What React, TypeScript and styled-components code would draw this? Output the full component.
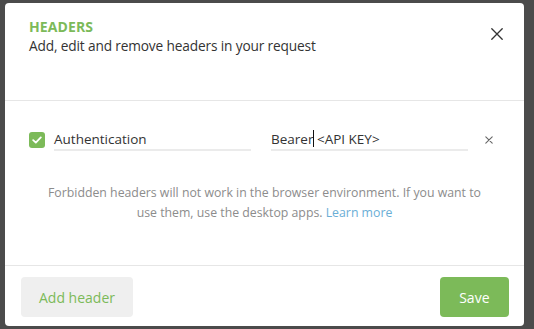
import styled, { createGlobalStyle } from 'styled-components'

const GlobalStyle = createGlobalStyle`
  html, body {
    margin: 0;
    padding: 0;
    background: #4b4b4b;
  }
  body {
    font-family: "Open Sans", "Noto Sans", "Liberation Sans", sans-serif;
    -webkit-font-smoothing: antialiased;
  }
`

const Backdrop = styled.div`
  width: 534px;
  height: 329px;
  box-sizing: border-box;
  padding: 3px 10px 3px 5px;
  background: #4b4b4b;
`

const Modal = styled.div`
  width: 519px;
  height: 323px;
  background: #fff;
  border-radius: 4px;
  display: flex;
  flex-direction: column;
  overflow: hidden;
`

const Header = styled.div`
  height: 98px;
  box-sizing: border-box;
  padding: 14px 16px 0 24px;
  border-bottom: 1px solid #e6e6e6;
  display: flex;
  align-items: flex-start;
  justify-content: space-between;
`

const Titles = styled.div`
  display: flex;
  flex-direction: column;
`

const Title = styled.h2`
  margin: 0;
  font-size: 14px;
  font-weight: 700;
  line-height: 19px;
  color: #7cba59;
  letter-spacing: 0.1px;
`

const Subtitle = styled.p`
  margin: 0;
  font-size: 13.7px;
  font-weight: 400;
  line-height: 19px;
  letter-spacing: -0.15px;
  color: #333;
`

const CloseButton = styled.button`
  margin-top: 6px;
  width: 22px;
  height: 22px;
  padding: 0;
  border: none;
  background: transparent;
  display: flex;
  align-items: center;
  justify-content: center;
  cursor: pointer;
`

const Body = styled.div`
  flex: 1;
  box-sizing: border-box;
  padding: 28px 24px 0 24px;
  display: flex;
  flex-direction: column;
`

const Row = styled.div`
  display: flex;
  align-items: center;
  height: 22px;
`

const Check = styled.span`
  width: 16px;
  height: 16px;
  border-radius: 3px;
  background: #7cba59;
  display: flex;
  align-items: center;
  justify-content: center;
  margin-right: 9px;
  flex-shrink: 0;
`

const Field = styled.div<{ $gap?: number }>`
  width: 197px;
  height: 22px;
  box-sizing: border-box;
  border-bottom: 2px solid #ebebeb;
  font-size: 13.5px;
  line-height: 20px;
  color: #333;
  white-space: nowrap;
  margin-right: ${p => p.$gap ?? 0}px;
`

const Caret = styled.span`
  display: inline-block;
  width: 1px;
  height: 17px;
  margin-right: -1px;
  background: #111;
  vertical-align: -3px;
`

const Remove = styled.button`
  margin-left: 10px;
  width: 22px;
  height: 22px;
  padding: 0;
  border: none;
  background: transparent;
  display: flex;
  align-items: center;
  justify-content: center;
  cursor: pointer;
`

const Note = styled.p`
  margin: 32px auto 0;
  width: 440px;
  text-align: center;
  font-size: 12.3px;
  line-height: 20px;
  color: #8c8c8c;
`

const Link = styled.a`
  color: #6aaed6;
  text-decoration: none;
`

const Footer = styled.div`
  height: 61px;
  box-sizing: border-box;
  border-top: 1px solid #e6e6e6;
  padding: 11px 15px 0 16px;
  display: flex;
  justify-content: space-between;
  align-items: flex-start;
`

const Button = styled.button<{ $primary?: boolean }>`
  height: 40px;
  padding: 0 ${p => (p.$primary ? 19.5 : 18)}px;
  border: none;
  border-radius: 4px;
  font-family: inherit;
  font-size: 14px;
  font-weight: 400;
  background: ${p => (p.$primary ? '#7cba59' : '#efefef')};
  color: ${p => (p.$primary ? '#fff' : '#7cba59')};
  cursor: pointer;
`

export default function App() {
  return (
    <>
      <GlobalStyle />
      <Backdrop>
        <Modal>
          <Header>
            <Titles>
              <Title>HEADERS</Title>
              <Subtitle>Add, edit and remove headers in your request</Subtitle>
            </Titles>
            <CloseButton aria-label="Close">
              <svg width="12" height="12" viewBox="0 0 12 12">
                <path d="M0.8 0.8L11.2 11.2M11.2 0.8L0.8 11.2" stroke="#333" strokeWidth="1.3" strokeLinecap="round" />
              </svg>
            </CloseButton>
          </Header>
          <Body>
            <Row>
              <Check>
                <svg width="10" height="8" viewBox="0 0 10 8">
                  <path d="M1.2 4.2L3.8 6.6L8.8 1.4" fill="none" stroke="#fff" strokeWidth="1.8" strokeLinecap="round" strokeLinejoin="round" />
                </svg>
              </Check>
              <Field $gap={20}>Authentication</Field>
              <Field>
                Bearer<Caret /> &lt;API KEY&gt;
              </Field>
              <Remove aria-label="Remove">
                <svg width="8" height="8" viewBox="0 0 8 8">
                  <path d="M0.8 0.8L7.2 7.2M7.2 0.8L0.8 7.2" stroke="#666" strokeWidth="1.1" strokeLinecap="round" />
                </svg>
              </Remove>
            </Row>
            <Note>
              Forbidden headers will not work in the browser environment. If you want to use them, use the desktop apps.{' '}
              <Link href="#">Learn more</Link>
            </Note>
          </Body>
          <Footer>
            <Button>Add header</Button>
            <Button $primary>Save</Button>
          </Footer>
        </Modal>
      </Backdrop>
    </>
  )
}
